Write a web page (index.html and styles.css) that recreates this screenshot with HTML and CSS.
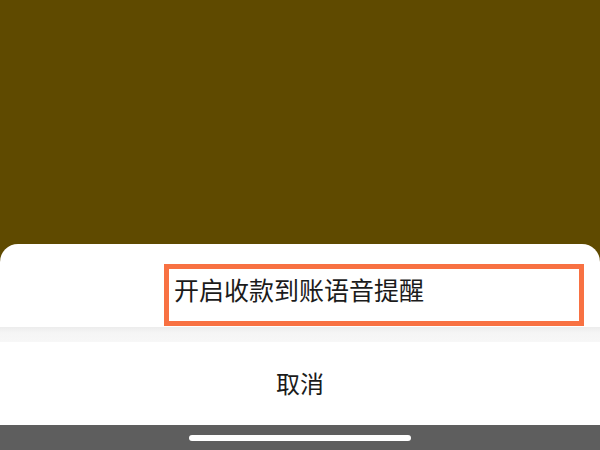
FILE: index.html
```html
<!DOCTYPE html>
<html lang="zh-CN">
<head>
<meta charset="utf-8">
<title>收款提醒</title>
<link rel="stylesheet" href="styles.css">
</head>
<body>
<div class="screen">
  <div class="backdrop"></div>
  <div class="sheet">
    <div class="option-row">
      <div class="highlight">
        <span class="option-text">开启收款到账语音提醒</span>
      </div>
    </div>
    <div class="divider"></div>
    <div class="cancel-row">
      <span class="cancel-text">取消</span>
    </div>
  </div>
  <div class="home-bar">
    <div class="home-indicator"></div>
  </div>
</div>
</body>
</html>
```

FILE: styles.css
```css
html, body {
  margin: 0;
  padding: 0;
}
body {
  width: 600px;
  height: 450px;
  overflow: hidden;
  background: #5f4a00;
  font-family: "Noto Sans CJK SC", "Noto Sans", sans-serif;
}
.screen {
  display: flex;
  flex-direction: column;
  width: 600px;
  height: 450px;
}
.backdrop {
  height: 244px;
  flex: none;
  background: #5f4a00;
}
.sheet {
  flex: 1;
  display: flex;
  flex-direction: column;
  background: #ffffff;
  border-radius: 18px 18px 0 0;
}
.option-row {
  height: 83px;
  box-sizing: border-box;
  padding: 20px 16px 0 164px;
}
.highlight {
  box-sizing: border-box;
  height: 62px;
  border: 5px solid #f87142;
  padding: 8px 0 0 5px;
}
.option-text {
  display: block;
  font-size: 25px;
  line-height: 25px;
  color: #1b1b1b;
  white-space: nowrap;
}
.divider {
  height: 15px;
  flex: none;
  background: linear-gradient(#ececec, #f5f5f5 40%, #f7f7f7);
}
.cancel-row {
  flex: 1;
  display: flex;
  align-items: center;
  justify-content: center;
}
.cancel-text {
  font-size: 24px;
  line-height: 24px;
  color: #1b1b1b;
  padding-bottom: 1px;
}
.home-bar {
  height: 25px;
  flex: none;
  background: #5e5e5e;
  display: flex;
  justify-content: center;
  padding-top: 10px;
  box-sizing: border-box;
}
.home-indicator {
  width: 222px;
  height: 6px;
  border-radius: 3px;
  background: #ffffff;
}
```
